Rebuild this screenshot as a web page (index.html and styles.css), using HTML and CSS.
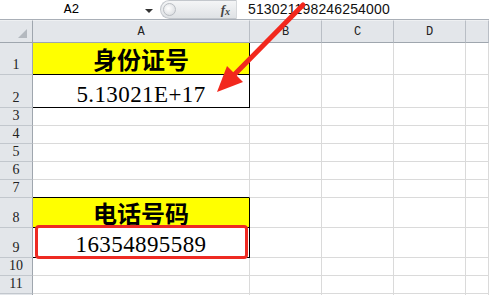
FILE: index.html
```html
<!DOCTYPE html>
<html lang="zh-CN">
<head>
    <meta charset="UTF-8">
    <title>身份证号</title>
    <link rel="stylesheet" href="styles.css">
</head>
<body>
    <div class="formula-bar">
        <div class="name-box">A2</div>
        <div class="name-arrow"></div>
        <div class="fx-box">
            <span class="knob"></span>
            <span class="fx">f<sub>x</sub></span>
        </div>
        <div class="formula-input">513021198246254000</div>
    </div>

    <div class="sheet">
        <!-- 欄標題 -->
        <div class="ch corner"><span class="tri"></span></div>
        <div class="ch">A</div>
        <div class="ch">B</div>
        <div class="ch">C</div>
        <div class="ch">D</div>
        <div class="ch"></div>

        <div class="rh">1</div>
        <div class="c yellow bk-r bk-b title">身份证号</div>
        <div class="c"></div><div class="c"></div><div class="c"></div><div class="c"></div>

        <div class="rh">2</div>
        <div class="c bk-r bk-b num">5.13021E+17</div>
        <div class="c"></div><div class="c"></div><div class="c"></div><div class="c"></div>

        <div class="rh">3</div>
        <div class="c"></div><div class="c"></div><div class="c"></div><div class="c"></div><div class="c"></div>

        <div class="rh">4</div>
        <div class="c"></div><div class="c"></div><div class="c"></div><div class="c"></div><div class="c"></div>

        <div class="rh">5</div>
        <div class="c"></div><div class="c"></div><div class="c"></div><div class="c"></div><div class="c"></div>

        <div class="rh">6</div>
        <div class="c"></div><div class="c"></div><div class="c"></div><div class="c"></div><div class="c"></div>

        <div class="rh">7</div>
        <div class="c bk-b"></div><div class="c"></div><div class="c"></div><div class="c"></div><div class="c"></div>

        <div class="rh">8</div>
        <div class="c yellow bk-r bk-b title">电话号码</div>
        <div class="c"></div><div class="c"></div><div class="c"></div><div class="c"></div>

        <div class="rh">9</div>
        <div class="c bk-r bk-b num">16354895589</div>
        <div class="c"></div><div class="c"></div><div class="c"></div><div class="c"></div>

        <div class="rh">10</div>
        <div class="c"></div><div class="c"></div><div class="c"></div><div class="c"></div><div class="c"></div>

        <div class="rh">11</div>
        <div class="c"></div><div class="c"></div><div class="c"></div><div class="c"></div><div class="c"></div>

        <div class="rh"></div>
        <div class="c"></div><div class="c"></div><div class="c"></div><div class="c"></div><div class="c"></div>
    </div>

    <!-- 標註 -->
    <div class="red-box"></div>
    <svg class="arrow" width="489" height="295" viewBox="0 0 489 295">
        <line x1="303" y1="5" x2="232" y2="77" stroke="#f2281d" stroke-width="5" stroke-linecap="round"/>
        <polygon points="217,92 227,66 243,82" fill="#f2281d"/>
    </svg>
</body>
</html>
```

FILE: styles.css
```css
* {
    margin: 0;
    padding: 0;
    box-sizing: border-box;
}

body {
    width: 489px;
    height: 295px;
    overflow: hidden;
    background: #ffffff;
    font-family: "Liberation Serif", "Noto Sans CJK SC", serif;
    color: #000;
    position: relative;
}

/* 公式列 */
.formula-bar {
    display: flex;
    align-items: center;
    height: 20px;
    border-bottom: 1px solid #a9afb7;
    background: #fff;
}

.name-box {
    width: 142px;
    text-align: center;
    font-family: "Liberation Mono", monospace;
    font-size: 13px;
    line-height: 19px;
    padding-left: 1px;
}

.name-arrow {
    width: 0;
    height: 0;
    border-left: 4px solid transparent;
    border-right: 4px solid transparent;
    border-top: 4px solid #333;
    margin-left: 3px;
    margin-top: 2px;
}

.fx-box {
    display: flex;
    align-items: center;
    justify-content: space-between;
    width: 77px;
    height: 19px;
    margin-left: 7px;
    padding: 0 6px 0 2px;
    background: linear-gradient(#f4f5f6, #dfe2e5);
    border: 1px solid #c3c7cc;
    border-right-color: #d6d9dc;
    border-radius: 10px 0 0 10px;
}

.knob {
    width: 13px;
    height: 13px;
    border-radius: 50%;
    background: radial-gradient(circle at 40% 40%, #ffffff, #d3d6da);
    border: 1px solid #b9bdc2;
}

.fx {
    font-family: "Liberation Serif", serif;
    font-style: italic;
    font-weight: bold;
    font-size: 13px;
    color: #444;
    line-height: 1;
}

.fx sub {
    font-size: 10px;
    vertical-align: -1px;
}

.formula-input {
    flex: 1;
    padding-left: 11px;
    font-family: "Liberation Sans", sans-serif;
    font-size: 14px;
    letter-spacing: 0.15px;
    line-height: 19px;
    color: #111;
}

/* 工作表 */
.sheet {
    display: grid;
    grid-template-columns: 33px 217px 72px 72px 72px 1fr;
    grid-template-rows: 23px 32px 33px 18px 18px 18px 18px 18px 30px 30px 18px 18px 2px;
}

.ch {
    background: #e3e6ea;
    border-right: 1px solid #b9bec5;
    border-bottom: 1px solid #9fa6ae;
    border-top: 1px solid #eef0f2;
    display: flex;
    align-items: center;
    justify-content: center;
    font-family: "Liberation Mono", monospace;
    font-size: 12px;
    color: #222;
    padding-top: 1px;
}

.corner {
    position: relative;
    border-right-color: #9fa6ae;
}

.tri {
    position: absolute;
    right: 5px;
    bottom: 4px;
    width: 0;
    height: 0;
    border-left: 9px solid transparent;
    border-bottom: 9px solid #b4b9bf;
}

.rh {
    background: #e3e6ea;
    border-right: 1px solid #9fa6ae;
    border-bottom: 1px solid #c2c7cd;
    display: flex;
    align-items: flex-end;
    justify-content: center;
    font-size: 14px;
    line-height: 14px;
    padding-bottom: 2px;
    color: #222;
    overflow: hidden;
}

.c {
    border-right: 1px solid #dadada;
    border-bottom: 1px solid #dadada;
}

.yellow {
    background: #ffff00;
}

.bk-r {
    border-right-color: #000;
}

.bk-b {
    border-bottom-color: #000;
}

.title {
    display: flex;
    align-items: center;
    justify-content: center;
    font-family: "Noto Sans CJK SC", sans-serif;
    font-weight: bold;
    font-size: 24px;
    line-height: 1;
    padding-top: 1px;
}

.num {
    display: flex;
    align-items: flex-end;
    justify-content: center;
    font-family: "Liberation Serif", serif;
    font-size: 23px;
    line-height: 23px;
    letter-spacing: 0.4px;
    padding-bottom: 1px;
}

/* 紅框與箭頭 */
.red-box {
    position: absolute;
    left: 35px;
    top: 225px;
    width: 213px;
    height: 34px;
    border: 3px solid #ee2a22;
    border-radius: 4px;
}

.arrow {
    position: absolute;
    left: 0;
    top: 0;
    pointer-events: none;
}
```
